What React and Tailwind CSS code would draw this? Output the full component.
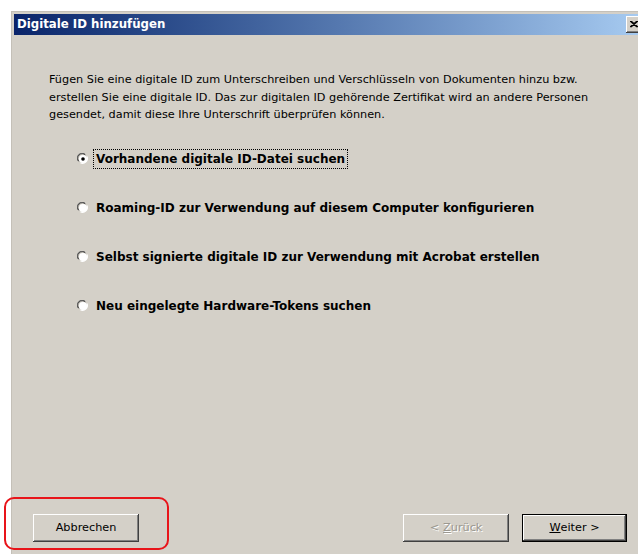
import React from "react";

const options = [
  "Vorhandene digitale ID-Datei suchen",
  "Roaming-ID zur Verwendung auf diesem Computer konfigurieren",
  "Selbst signierte digitale ID zur Verwendung mit Acrobat erstellen",
  "Neu eingelegte Hardware-Tokens suchen",
];

// classic 3d bevel for dialog buttons
const bevel =
  "shadow-[inset_-1px_-1px_#404040,inset_1px_1px_#ffffff,inset_-2px_-2px_#808080,inset_2px_2px_#d4d0c8]";

const Radio = ({ checked }) => (
  <svg width="12" height="12" viewBox="0 0 12 12" className="shrink-0">
    <path d="M1 8 A5 5 0 0 1 8 1" stroke="#808080" strokeWidth="1" fill="none" />
    <path d="M2 8.5 A4.2 4.2 0 0 1 8.5 2" stroke="#404040" strokeWidth="1" fill="none" />
    <path d="M10 3.5 A5 5 0 0 1 3.5 10" stroke="#ffffff" strokeWidth="1.2" fill="none" />
    <circle cx="6" cy="6" r="4" fill="#ffffff" />
    {checked && <circle cx="6" cy="6" r="1.8" fill="#000000" />}
  </svg>
);

const Button = ({ children, disabled, primary, className = "" }) => (
  <div
    className={`h-[28px] flex items-center justify-center text-[11.25px] bg-[#d4d0c8] ${
      primary ? "w-[105px] border border-black" : "w-[106px]"
    } ${bevel} ${disabled ? "text-[#9a978f] [text-shadow:1px_1px_#ffffff]" : "text-black"} ${className}`}
  >
    {children}
  </div>
);

export default function App() {
  return (
    <div
      className="relative w-[638px] h-[554px] bg-white overflow-hidden pl-[11px] pt-[11px]"
      style={{ fontFamily: '"DejaVu Sans", Verdana, sans-serif' }}
    >
      <div className="h-full flex flex-col bg-[#d4d0c8] border-l border-t border-[#c4c0b8] pl-[2px] pt-[2px]">
        {/* title bar */}
        <div className="h-[21px] flex items-center justify-between bg-gradient-to-r from-[#0a246a] to-[#a6caf0]">
          <span className="pl-[3px] text-white text-[11.75px] font-bold">Digitale ID hinzufügen</span>
          <div className={`w-[16px] h-[17px] mr-[-4px] bg-[#d4d0c8] flex items-center justify-center ${bevel}`}>
            <svg width="8" height="7" viewBox="0 0 8 7">
              <path d="M0 0 L7 6 M1 0 L8 6 M7 0 L0 6 M8 0 L1 6" stroke="#000" strokeWidth="1.2" />
            </svg>
          </div>
        </div>

        {/* body */}
        <div className="flex-1 flex flex-col">
          <p className="mt-[36px] ml-[35px] mr-[6px] text-[11.25px] leading-[17.5px] text-black">
            Fügen Sie eine digitale ID zum Unterschreiben und Verschlüsseln von Dokumenten hinzu bzw.
            <br />
            erstellen Sie eine digitale ID. Das zur digitalen ID gehörende Zertifikat wird an andere Personen
            <br />
            gesendet, damit diese Ihre Unterschrift überprüfen können.
          </p>

          <div className="mt-[25px] ml-[63px] flex flex-col gap-[29px]">
            {options.map((label, i) => (
              <div key={label} className="h-[20px] flex items-center gap-[4px]">
                <Radio checked={i === 0} />
                <span
                  className={`text-[12px] font-bold text-black px-[2px] leading-[18px] ${
                    i === 0 ? "border border-dotted border-black" : "border border-transparent"
                  }`}
                >
                  {label}
                </span>
              </div>
            ))}
          </div>

          {/* footer buttons */}
          <div className="mt-auto mb-[12px] flex items-center pl-[19px] pr-[11px]">
            <Button>Abbrechen</Button>
            <div className="flex-1" />
            <Button disabled className="mr-[13px]">
              &lt; <span className="underline ml-[4px]">Z</span>urück
            </Button>
            <Button primary>
              <span className="underline">W</span>eiter &gt;
            </Button>
          </div>
        </div>
      </div>

      {/* highlight around the cancel button */}
      <div className="absolute left-[4px] top-[497px] w-[165px] h-[53px] rounded-[10px] border-2 border-[#e8141a]" />
    </div>
  );
}
